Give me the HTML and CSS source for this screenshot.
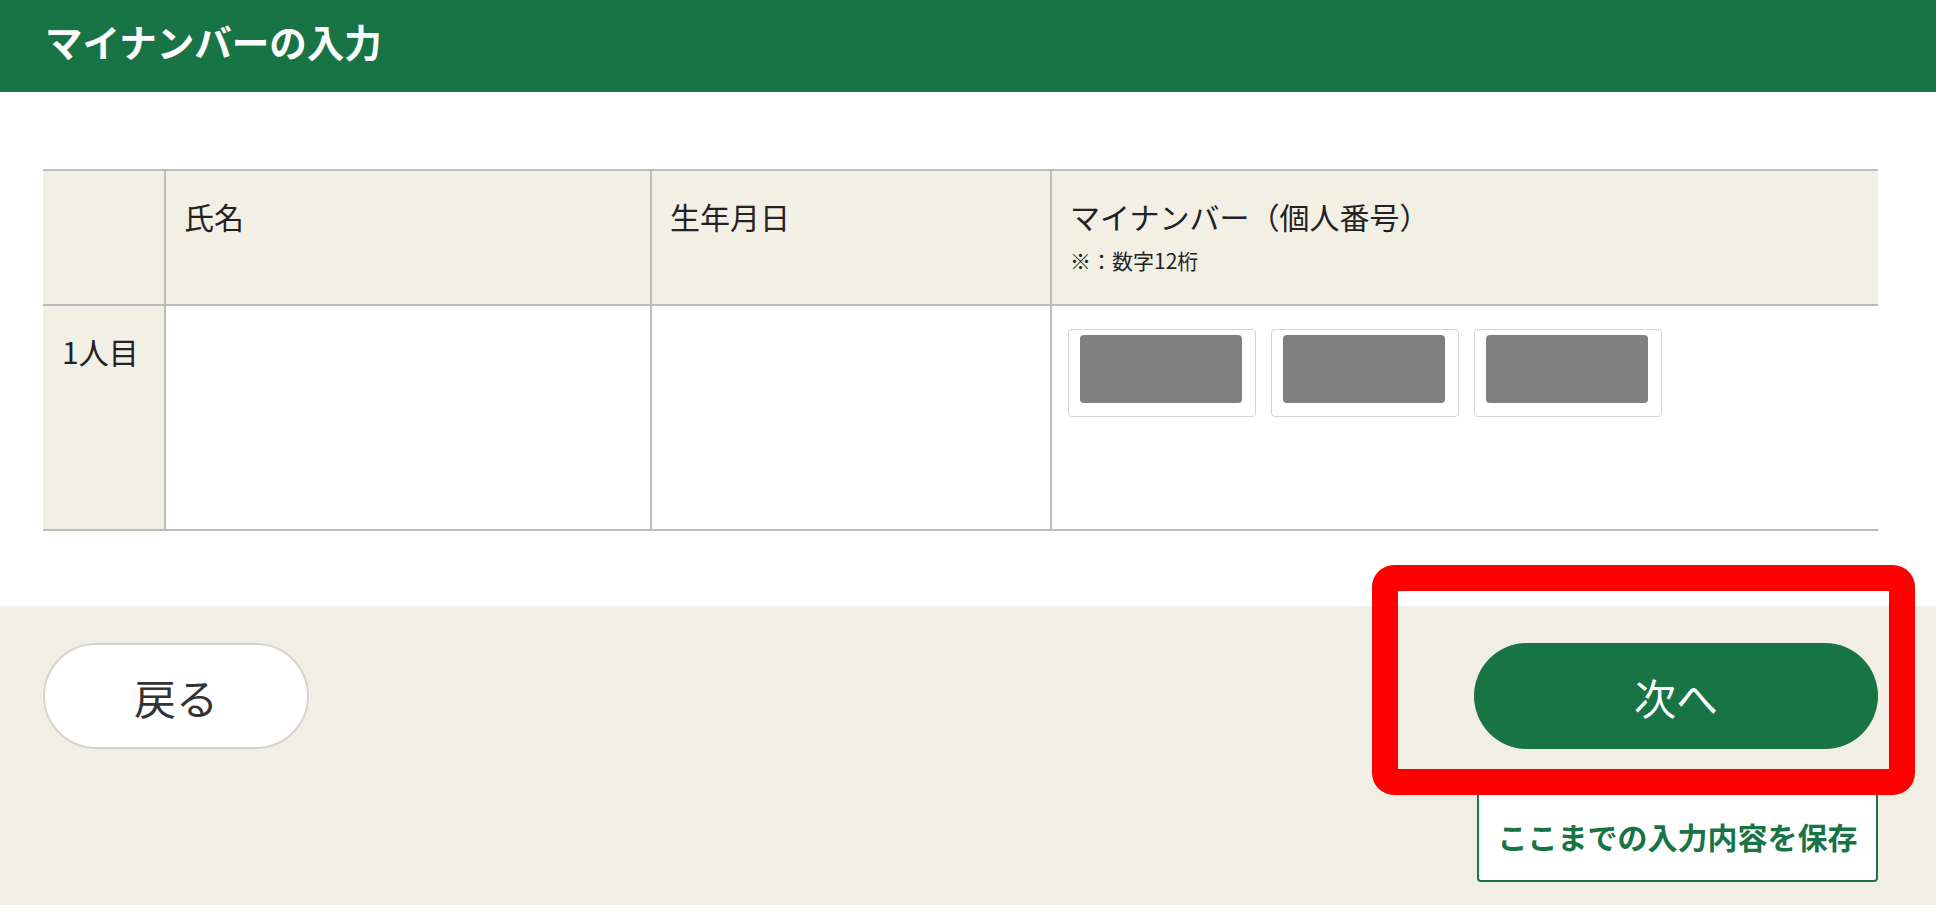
FILE: index.html
```html
<!DOCTYPE html>
<html lang="ja">
<head>
  <meta charset="UTF-8" />
  <meta name="viewport" content="width=device-width, initial-scale=1.0" />
  <title>マイナンバーの入力</title>
  <link rel="stylesheet" href="styles.css">
</head>
<body>
  <header class="page-title">
    <h1>マイナンバーの入力</h1>
  </header>

  <main class="content">
    <table class="number-table">
      <colgroup>
        <col class="col-label">
        <col class="col-name">
        <col class="col-birth">
        <col class="col-number">
      </colgroup>
      <thead>
        <tr>
          <th class="row-label"></th>
          <th>氏名</th>
          <th>生年月日</th>
          <th>
            マイナンバー（個人番号）
            <span class="note">※：数字12桁</span>
          </th>
        </tr>
      </thead>
      <tbody>
        <tr>
          <th class="row-label">1人目</th>
          <td></td>
          <td></td>
          <td>
            <div class="digit-fields">
              <span class="digit-field"><span class="masked"></span></span>
              <span class="digit-field"><span class="masked"></span></span>
              <span class="digit-field"><span class="masked"></span></span>
            </div>
          </td>
        </tr>
      </tbody>
    </table>
  </main>

  <footer class="actions">
    <button class="btn btn-back">戻る</button>
    <div class="actions-right">
      <div class="next-wrap">
        <button class="btn btn-next">次へ</button>
        <div class="callout"></div>
      </div>
      <button class="btn-save">ここまでの入力内容を保存</button>
    </div>
  </footer>
</body>
</html>
```

FILE: styles.css
```css
/* ======================
   Base
   ====================== */
*, *::before, *::after {
  box-sizing: border-box;
  margin: 0;
  padding: 0;
}
html, body {
  background-color: #fff;
  color: #222;
  font-family: "Noto Sans CJK JP", "Noto Sans", sans-serif;
}

/* ======================
   Title bar
   ====================== */
.page-title {
  height: 92px;
  background-color: #197445;
  display: flex;
  align-items: center;
  padding: 0 0 10px 45px;
}
.page-title h1 {
  color: #fff;
  font-size: 37.5px;
  font-weight: 700;
  line-height: 1;
}

/* ======================
   Table
   ====================== */
.content {
  padding: 77px 58px 75px 43px;
}
.number-table {
  width: 100%;
  table-layout: fixed;
  border-collapse: collapse;
  border-top: 2px solid #bcbcbc;
  border-bottom: 2px solid #bcbcbc;
}
.col-label { width: 122px; }
.col-name { width: 486px; }
.col-birth { width: 400px; }

.number-table th,
.number-table td {
  text-align: left;
  vertical-align: top;
  font-size: 30px;
  font-weight: 400;
  line-height: 42px;
  padding: 24px 18px;
  border-left: 2px solid #bcbcbc;
  background-color: #fff;
}
.number-table thead th {
  height: 135px;
  background-color: #f2efe5;
  border-bottom: 2px solid #bcbcbc;
}
.number-table tbody td,
.number-table tbody th {
  height: 225px;
}
.number-table .row-label {
  border-left: none;
  background-color: #f2efe5;
  padding-left: 19px;
}
.note {
  display: block;
  font-size: 21px;
  line-height: 30px;
  margin-top: 8px;
}

/* ======================
   Number inputs
   ====================== */
.number-table tbody td:last-child {
  padding: 23px 16px;
}
.digit-fields {
  display: flex;
  gap: 15px;
}
.digit-field {
  display: block;
  width: 188px;
  height: 88px;
  padding: 5px 13px 13px 11px;
  border: 1px solid #d8d4cb;
  border-radius: 4px;
  background-color: #fff;
}
.masked {
  display: block;
  width: 100%;
  height: 100%;
  background-color: #808080;
  border-radius: 4px;
}

/* ======================
   Footer buttons
   ====================== */
.actions {
  display: flex;
  justify-content: space-between;
  align-items: flex-start;
  background-color: #f1efe5;
  padding: 37px 58px 23px 43px;
}
.btn {
  height: 106px;
  border-radius: 53px;
  font-family: inherit;
  font-size: 42px;
  cursor: pointer;
}
.btn-back {
  width: 266px;
  background-color: #fff;
  color: #333;
  border: 2px solid #d6d3cb;
}
.actions-right {
  display: flex;
  flex-direction: column;
  align-items: flex-end;
  gap: 40px;
}
.next-wrap {
  position: relative;
}
.btn-next {
  width: 404px;
  background-color: #197445;
  color: #fff;
  border: none;
}
.btn-save {
  width: 401px;
  height: 93px;
  background-color: #fff;
  color: #197445;
  border: 2px solid #197445;
  border-radius: 4px;
  font-family: inherit;
  font-size: 30px;
  font-weight: 700;
  cursor: pointer;
}

/* red highlight drawn over the next button */
.callout {
  position: absolute;
  top: -78px;
  left: -102px;
  right: -37px;
  bottom: -46px;
  border: 26px solid #ff0000;
  border-radius: 22px;
  z-index: 2;
  pointer-events: none;
}
```
